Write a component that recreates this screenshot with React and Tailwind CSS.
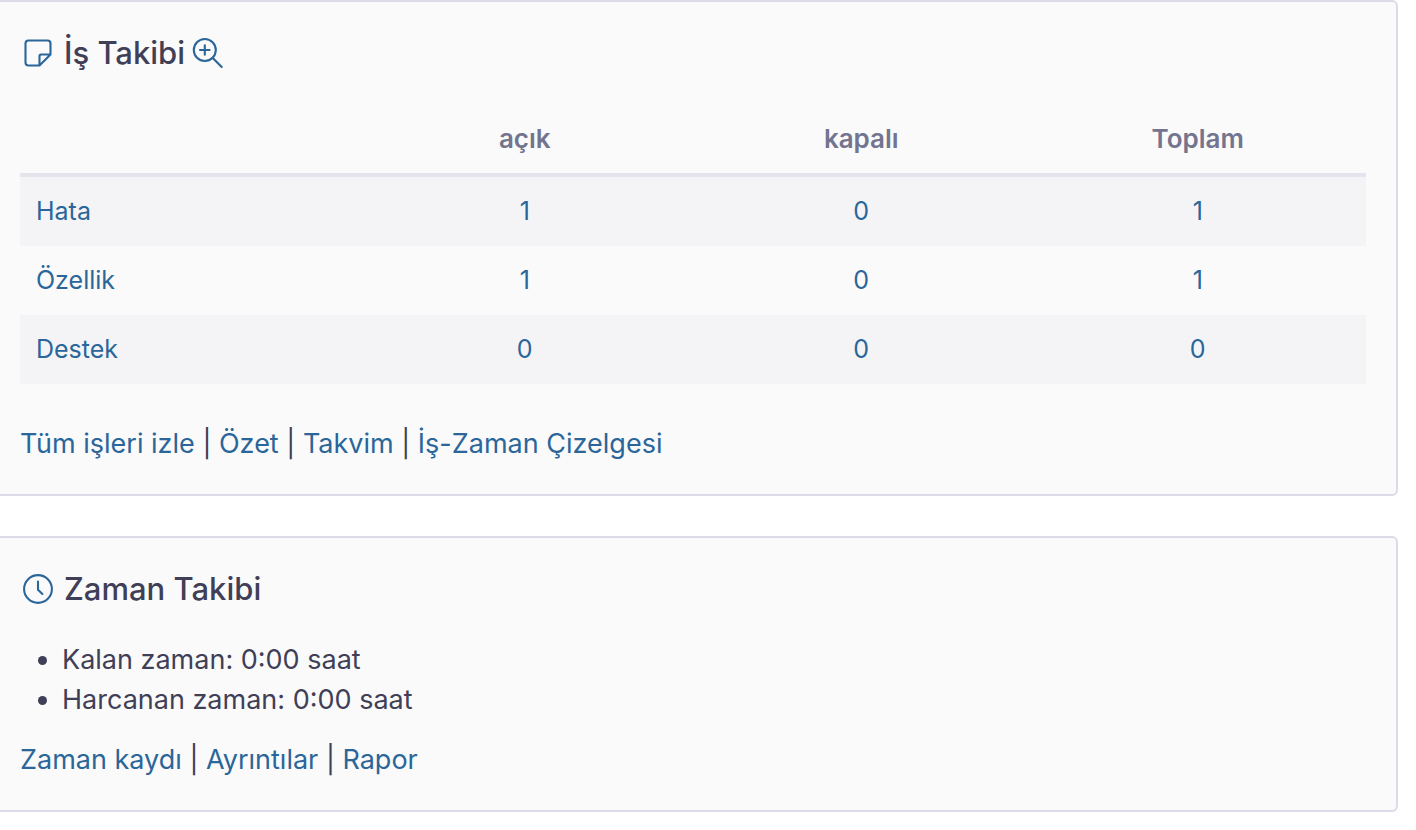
const issueColumns = ["açık", "kapalı", "Toplam"];

const issueRows = [
  { tracker: "Hata", counts: [1, 0, 1] },
  { tracker: "Özellik", counts: [1, 0, 1] },
  { tracker: "Destek", counts: [0, 0, 0] },
];

const issueLinks = ["Tüm işleri izle", "Özet", "Takvim", "İş-Zaman Çizelgesi"];
const timeLinks = ["Zaman kaydı", "Ayrıntılar", "Rapor"];
const timeEntries = ["Kalan zaman: 0:00 saat", "Harcanan zaman: 0:00 saat"];

function Icon({ children }) {
  return (
    <svg
      className="size-9 shrink-0"
      viewBox="0 0 36 36"
      fill="none"
      stroke="#2a6699"
      strokeWidth="2.1"
      strokeLinecap="round"
      strokeLinejoin="round"
      aria-hidden="true"
    >
      {children}
    </svg>
  );
}

function NoteIcon() {
  return (
    <Icon>
      <path d="M19.500 30.500H8.500a3 3 0 0 1-3-3V8.500a3 3 0 0 1 3-3h19a3 3 0 0 1 3 3v11L19.500 30.500V21a1.500 1.500 0 0 1 1.500-1.500h9.500" />
    </Icon>
  );
}

function ZoomInIcon() {
  return (
    <Icon>
      <circle cx="15.800" cy="15" r="11" />
      <path d="M23.700 22.900l9 9M15.800 10.200v9.600M11 15h9.600" />
    </Icon>
  );
}

function ClockIcon() {
  return (
    <Icon>
      <circle cx="18" cy="18" r="13.900" />
      <path d="M18 10.500v8.300l4.400 4.200" />
    </Icon>
  );
}

function Panel({ children }) {
  return (
    <section className="mr-[18px] rounded-r-md border-2 border-l-0 border-[#dcdce8] bg-[#fafafa] pr-[30px] pl-5">
      {children}
    </section>
  );
}

function LinkBar({ links }) {
  return (
    <p className="text-[27px] leading-10">
      {links.map((label, i) => (
        <span key={label}>
          {i > 0 && " | "}
          <a href="#" className="text-[#2a6699] hover:underline">{label}</a>
        </span>
      ))}
    </p>
  );
}

export default function App() {
  return (
    <main className="flex flex-col gap-10 font-['Inter','Liberation_Sans',sans-serif] text-[#3f3f57]">
      <Panel>
        <div className="flex h-[102px] items-center">
          <NoteIcon />
          <h3 className="ml-2 text-[31px] font-medium">İş Takibi</h3>
          <a href="#" aria-label="Ayrıntılar" className="ml-1">
            <ZoomInIcon />
          </a>
        </div>
        <table className="w-full table-fixed border-separate border-spacing-0 text-center text-[25px]">
          <thead>
            <tr className="h-[73px] text-[26px] text-[#73748f]">
              <td className="border-b-4 border-[#e4e4ec]" />
              {issueColumns.map((name) => (
                <th key={name} scope="col" className="border-b-4 border-[#e4e4ec] p-0 font-semibold">
                  {name}
                </th>
              ))}
            </tr>
          </thead>
          <tbody>
            {issueRows.map(({ tracker, counts }) => (
              <tr key={tracker} className="h-[69px] odd:bg-[#f4f4f7]">
                <th scope="row" className="pl-4 text-left font-normal">
                  <a href="#" className="text-[#2a6699] hover:underline">{tracker}</a>
                </th>
                {counts.map((count, i) => (
                  <td key={issueColumns[i]}>
                    <a href="#" className="text-[#2a6699] hover:underline">{count}</a>
                  </td>
                ))}
              </tr>
            ))}
          </tbody>
        </table>
        <div className="pt-10 pb-[30px]">
          <LinkBar links={issueLinks} />
        </div>
      </Panel>

      <Panel>
        <div className="flex h-[102px] items-center">
          <ClockIcon />
          <h3 className="ml-2 text-[31px] font-medium">Zaman Takibi</h3>
        </div>
        <ul className="list-disc pl-[42px] text-[27px] leading-10">
          {timeEntries.map((entry) => (
            <li key={entry}>{entry}</li>
          ))}
        </ul>
        <div className="pt-5 pb-[30px]">
          <LinkBar links={timeLinks} />
        </div>
      </Panel>
    </main>
  );
}
